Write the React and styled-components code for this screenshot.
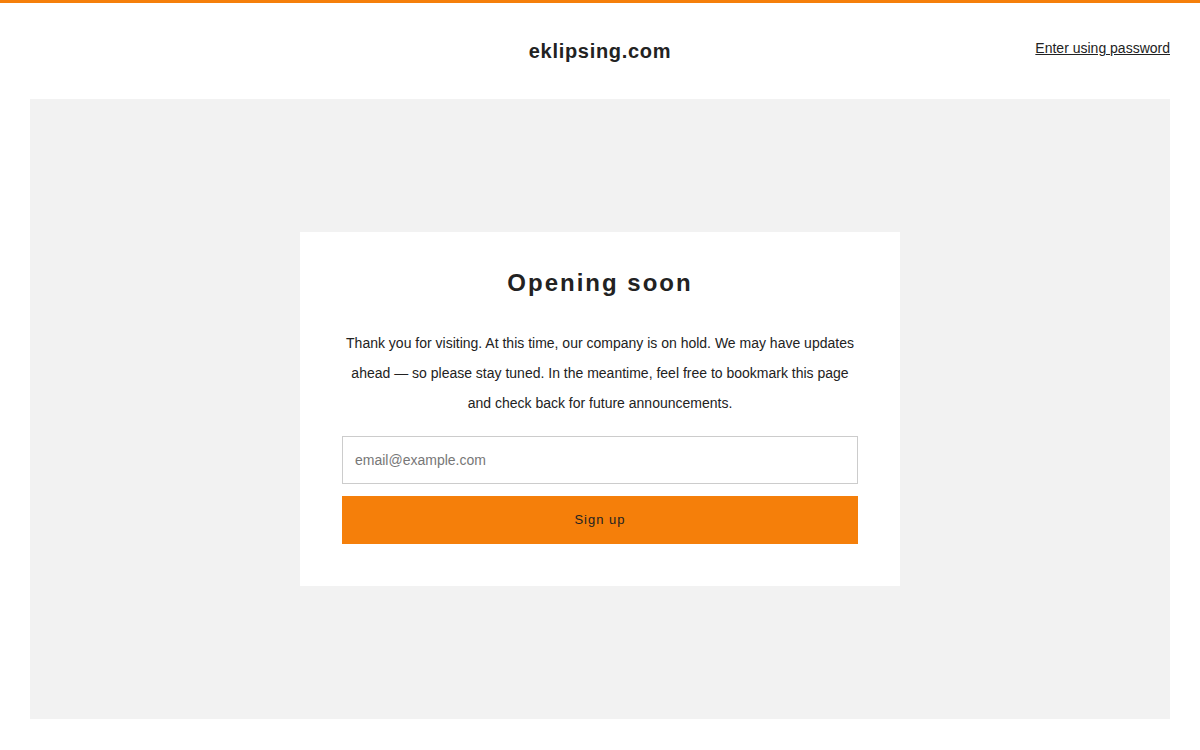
import React from "react";
import styled, { createGlobalStyle } from "styled-components";

const ORANGE = "#f57f0a";

const GlobalStyle = createGlobalStyle`
  html, body {
    margin: 0;
    padding: 0;
    background: #ffffff;
    font-family: "Liberation Sans", Arial, sans-serif;
    color: #222222;
  }
  * { box-sizing: border-box; }
`;

const Page = styled.div`
  min-height: 750px;
  border-top: 3px solid ${ORANGE};
  display: flex;
  flex-direction: column;
  padding: 0 30px 31px;
`;

const Header = styled.header`
  height: 96px;
  display: grid;
  grid-template-columns: 1fr auto 1fr;
  align-items: center;
`;

const Brand = styled.h1`
  grid-column: 2;
  margin: 0;
  font-size: 20px;
  font-weight: 700;
  letter-spacing: 0.7px;
  color: #222222;
`;

const PasswordLink = styled.a`
  justify-self: end;
  margin-bottom: 6px;
  font-size: 14px;
  color: #222222;
  text-decoration: underline;
  cursor: pointer;
`;

const Panel = styled.main`
  height: 620px;
  background: #f2f2f2;
  display: flex;
  align-items: center;
  justify-content: center;
`;

const Card = styled.section`
  width: 600px;
  background: #ffffff;
  padding: 35px 42px 42px;
  display: flex;
  flex-direction: column;
  align-items: stretch;
  text-align: center;
`;

const Title = styled.h2`
  margin: 0 0 30px;
  font-size: 24px;
  line-height: 31px;
  font-weight: 700;
  letter-spacing: 2px;
  color: #222222;
`;

const Message = styled.p`
  margin: 0 0 18px;
  font-size: 14px;
  line-height: 30px;
  color: #222222;
`;

const EmailInput = styled.input`
  height: 48px;
  border: 1px solid #cccccc;
  padding: 0 12px;
  font-family: inherit;
  font-size: 14px;
  color: #222222;
  outline: none;
  &::placeholder { color: #777777; }
`;

const SubmitButton = styled.button`
  margin-top: 12px;
  height: 48px;
  border: none;
  padding: 0 0 2px;
  background: ${ORANGE};
  font-family: inherit;
  font-size: 13px;
  letter-spacing: 1px;
  color: #222222;
  cursor: pointer;
`;

export default function App() {
  return (
    <>
      <GlobalStyle />
      <Page>
        <Header>
          <Brand>eklipsing.com</Brand>
          <PasswordLink>Enter using password</PasswordLink>
        </Header>
        <Panel>
          <Card>
            <Title>Opening soon</Title>
            <Message>
              Thank you for visiting. At this time, our company is on hold. We may have updates
              ahead — so please stay tuned. In the meantime, feel free to bookmark this page and
              check back for future announcements.
            </Message>
            <EmailInput type="email" placeholder="email@example.com" />
            <SubmitButton type="button">Sign up</SubmitButton>
          </Card>
        </Panel>
      </Page>
    </>
  );
}
